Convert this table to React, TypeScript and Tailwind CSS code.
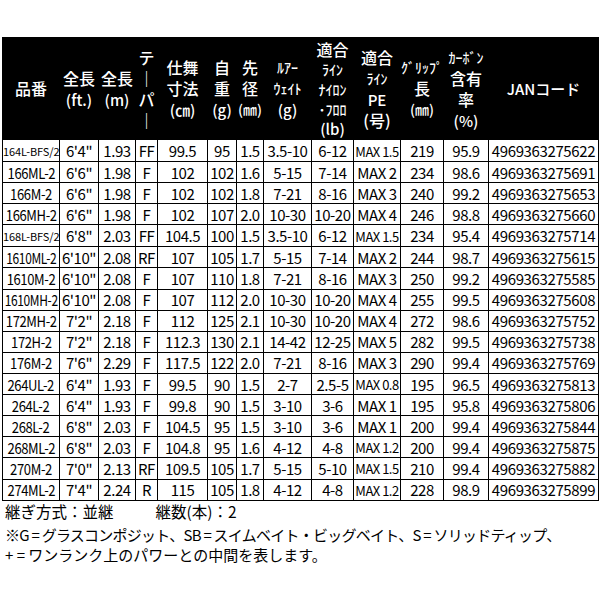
import React from "react";

type Line = { t: string; c?: string };

const headers: { lines: Line[]; w: number; lh?: string }[] = [
  { w: 57, lines: [{ t: "品番" }] },
  { w: 39, lines: [{ t: "全長" }, { t: "(ft.)", c: "text-[15px]" }] },
  { w: 37, lines: [{ t: "全長" }, { t: "(m)", c: "text-[15px]" }] },
  { w: 22, lines: [{ t: "テ" }, { t: "｜" }, { t: "パ" }, { t: "｜" }] },
  { w: 50, lines: [{ t: "仕舞" }, { t: "寸法" }, { t: "(㎝)", c: "text-[15px]" }] },
  { w: 29, lines: [{ t: "自" }, { t: "重" }, { t: "(g)", c: "text-[15px]" }] },
  { w: 27, lines: [{ t: "先" }, { t: "径" }, { t: "(㎜)", c: "text-[14px]" }] },
  { w: 48, lines: [{ t: "ﾙｱｰ", c: "text-[14px]" }, { t: "ｳｪｲﾄ", c: "text-[14px]" }, { t: "(g)", c: "text-[15px]" }] },
  {
    w: 42,
    lh: "leading-[20px]",
    lines: [
      { t: "適合" },
      { t: "ﾗｲﾝ", c: "text-[14px]" },
      { t: "ﾅｲﾛﾝ", c: "text-[14px]" },
      { t: "･ﾌﾛﾛ", c: "text-[14px]" },
      { t: "(lb)", c: "text-[15px]" },
    ],
  },
  { w: 47, lines: [{ t: "適合" }, { t: "ﾗｲﾝ", c: "text-[14px]" }, { t: "PE", c: "text-[15px]" }, { t: "(号)" }] },
  { w: 43, lines: [{ t: "ｸﾞﾘｯﾌﾟ", c: "text-[14px]" }, { t: "長" }, { t: "(㎜)", c: "text-[14px]" }] },
  { w: 45, lines: [{ t: "ｶｰﾎﾞﾝ", c: "text-[14px]" }, { t: "含有" }, { t: "率" }, { t: "(%)", c: "text-[15px]" }] },
  { w: 110, lines: [{ t: "JANコード", c: "text-[15px]" }] },
];

const rows: string[][] = [
  ["164L-BFS/2", "6'4\"", "1.93", "FF", "99.5", "95", "1.5", "3.5-10", "6-12", "MAX 1.5", "219", "95.9", "4969363275622"],
  ["166ML-2", "6'6\"", "1.98", "F", "102", "102", "1.6", "5-15", "7-14", "MAX 2", "234", "98.6", "4969363275691"],
  ["166M-2", "6'6\"", "1.98", "F", "102", "102", "1.8", "7-21", "8-16", "MAX 3", "240", "99.2", "4969363275653"],
  ["166MH-2", "6'6\"", "1.98", "F", "102", "107", "2.0", "10-30", "10-20", "MAX 4", "246", "98.8", "4969363275660"],
  ["168L-BFS/2", "6'8\"", "2.03", "FF", "104.5", "100", "1.5", "3.5-10", "6-12", "MAX 1.5", "234", "95.4", "4969363275714"],
  ["1610ML-2", "6'10\"", "2.08", "RF", "107", "105", "1.7", "5-15", "7-14", "MAX 2", "244", "98.7", "4969363275615"],
  ["1610M-2", "6'10\"", "2.08", "F", "107", "110", "1.8", "7-21", "8-16", "MAX 3", "250", "99.2", "4969363275585"],
  ["1610MH-2", "6'10\"", "2.08", "F", "107", "112", "2.0", "10-30", "10-20", "MAX 4", "255", "99.5", "4969363275608"],
  ["172MH-2", "7'2\"", "2.18", "F", "112", "125", "2.1", "10-30", "10-20", "MAX 4", "272", "98.6", "4969363275752"],
  ["172H-2", "7'2\"", "2.18", "F", "112.3", "130", "2.1", "14-42", "12-25", "MAX 5", "282", "99.5", "4969363275738"],
  ["176M-2", "7'6\"", "2.29", "F", "117.5", "122", "2.0", "7-21", "8-16", "MAX 3", "290", "99.4", "4969363275769"],
  ["264UL-2", "6'4\"", "1.93", "F", "99.5", "90", "1.5", "2-7", "2.5-5", "MAX 0.8", "195", "96.5", "4969363275813"],
  ["264L-2", "6'4\"", "1.93", "F", "99.8", "90", "1.5", "3-10", "3-6", "MAX 1", "195", "95.8", "4969363275806"],
  ["268L-2", "6'8\"", "2.03", "F", "104.5", "95", "1.5", "3-10", "3-6", "MAX 1", "200", "99.4", "4969363275844"],
  ["268ML-2", "6'8\"", "2.03", "F", "104.8", "95", "1.6", "4-12", "4-8", "MAX 1.2", "200", "99.4", "4969363275875"],
  ["270M-2", "7'0\"", "2.13", "RF", "109.5", "105", "1.7", "5-15", "5-10", "MAX 1.5", "210", "99.4", "4969363275882"],
  ["274ML-2", "7'4\"", "2.24", "R", "115", "105", "1.8", "4-12", "4-8", "MAX 1.2", "228", "98.9", "4969363275899"],
];

// narrow columns: the product code is squeezed, small MAX values set tighter
function Cell({ col, v }: { col: number; v: string }) {
  if (col === 0) {
    if (v.includes("BFS")) return <span className="text-[11px] tracking-[-0.01em]">{v}</span>;
    const squeeze = v.length >= 8 ? "scale-x-[0.8]" : "scale-x-[0.87]";
    return (
      <div className="flex justify-center">
        <span className={`inline-block shrink-0 text-[15px] tracking-[-0.03em] ${squeeze}`}>{v}</span>
      </div>
    );
  }
  if (col === 9 && v.includes(".")) return <span className="text-[13px] tracking-[-0.04em]">{v}</span>;
  if (col === 12) return <span className="text-[15px] tracking-[-0.025em]">{v}</span>;
  return <span className="text-[15px] tracking-[-0.03em]">{v}</span>;
}

export default function App() {
  return (
    <div
      className="w-[600px] h-[600px] bg-white pt-[37px] px-[2px] text-black"
      style={{ fontFamily: '"Noto Sans CJK JP", "Noto Sans", sans-serif' }}
    >
      <table className="w-[596px] table-fixed border-collapse">
        <colgroup>
          {headers.map((h, i) => (
            <col key={i} style={{ width: h.w }} />
          ))}
        </colgroup>
        <thead>
          <tr className="h-[102px] bg-black text-white">
            {headers.map((h, i) => (
              <th key={i} className="border border-black p-0 font-medium align-middle">
                <div className={`flex flex-col items-center text-[16px] ${h.lh ?? "leading-[21px]"}`}>
                  {h.lines.map((l, j) => (
                    <span key={j} className={`whitespace-nowrap ${l.c ?? ""}`}>
                      {l.t}
                    </span>
                  ))}
                </div>
              </th>
            ))}
          </tr>
        </thead>
        <tbody>
          {rows.map((r, i) => (
            <tr key={i} className="h-[21.12px]">
              {r.map((v, j) => (
                <td key={j} className="border border-black p-0 text-center leading-[19px] whitespace-nowrap">
                  <Cell col={j} v={v} />
                </td>
              ))}
            </tr>
          ))}
        </tbody>
      </table>
      <div className="pl-[3px] text-[15.5px] leading-[21px] flex gap-[42px]">
        <span>継ぎ方式：並継</span>
        <span>継数(本)：2</span>
      </div>
      <div className="mt-[3px] pl-[3px] text-[15px] leading-[20px]">
        <div className="whitespace-nowrap tracking-[-0.05em]">
          ※G = グラスコンポジット、SB = スイムベイト・ビッグベイト、S = ソリッドティップ、
        </div>
        <div className="whitespace-nowrap">+ = ワンランク上のパワーとの中間を表します。</div>
      </div>
    </div>
  );
}
